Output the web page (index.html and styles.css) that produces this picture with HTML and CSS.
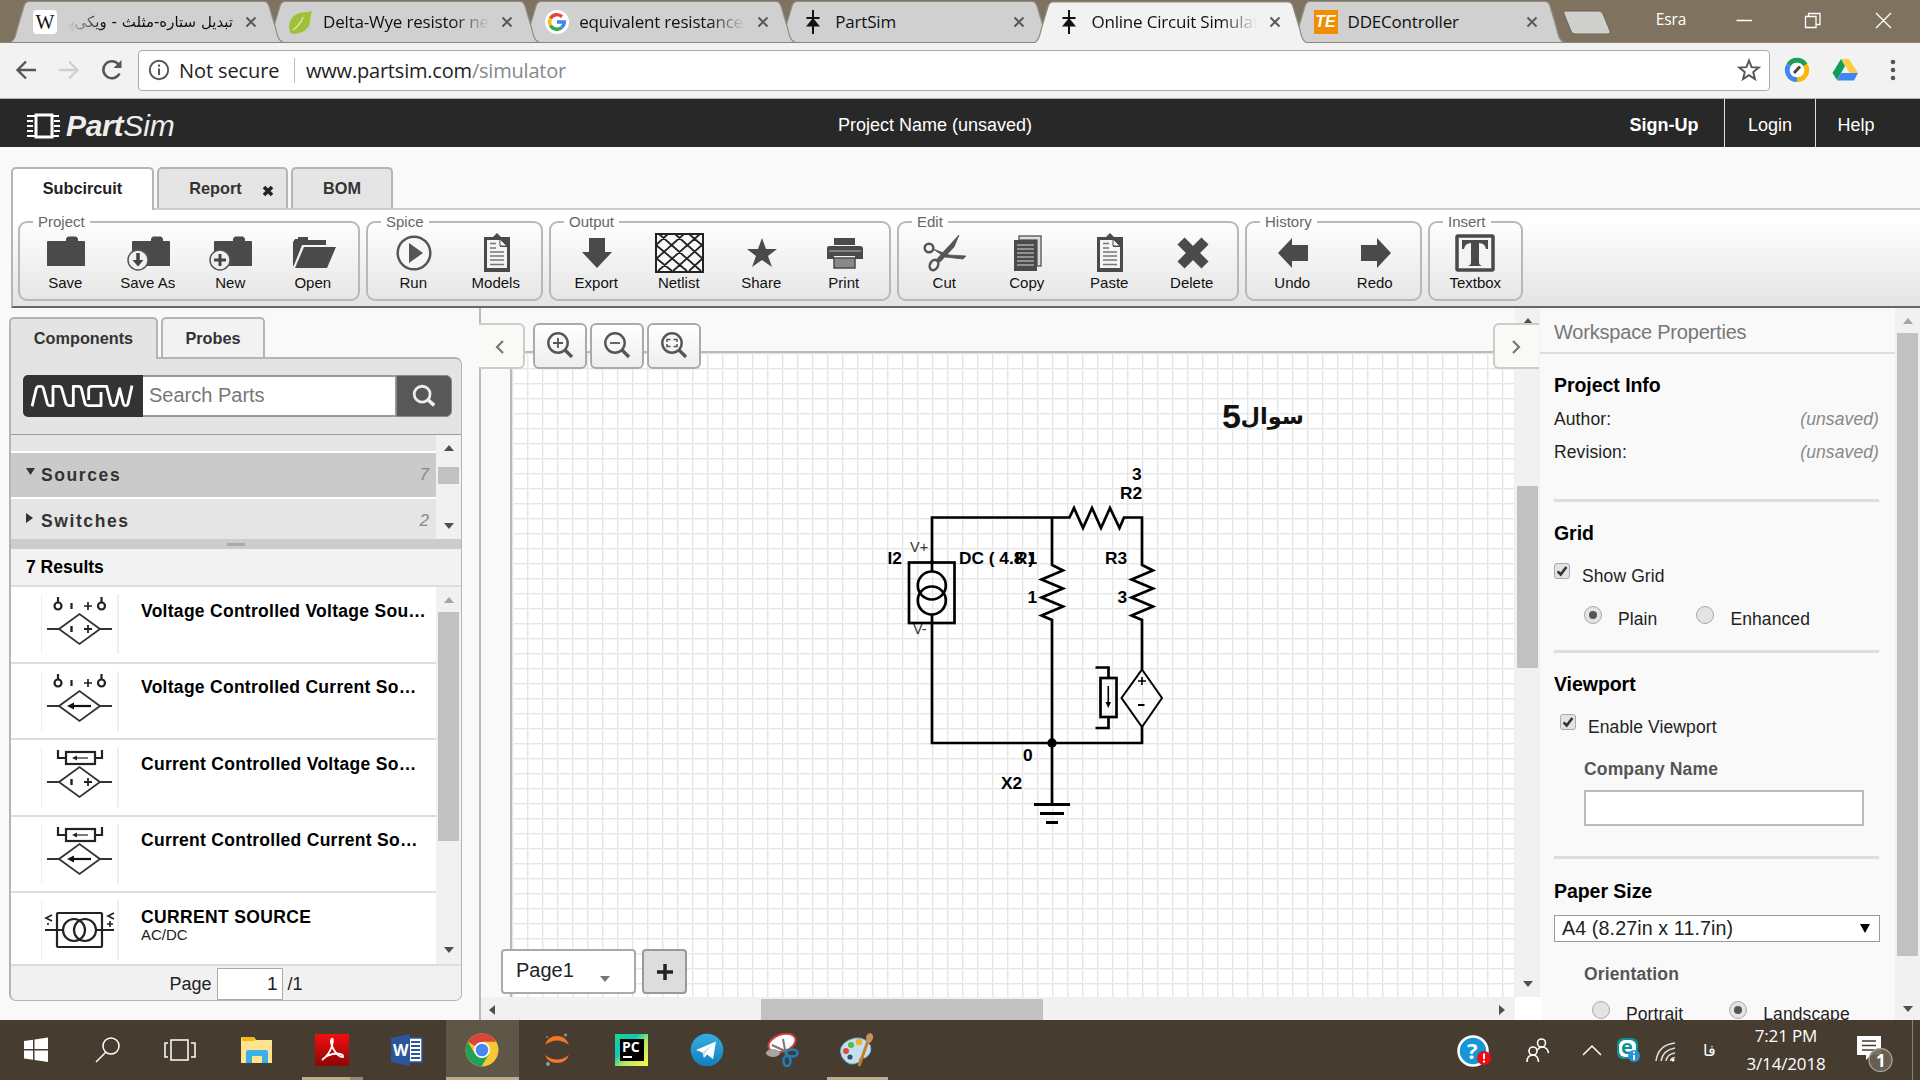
FILE: index.html
```html
<!DOCTYPE html>
<html lang="en">
<head>
<meta charset="utf-8">
<title>Online Circuit Simulator</title>
<link rel="stylesheet" href="styles.css">
</head>
<body>
<svg class="defs" width="0" height="0">
  <defs>
    <linearGradient id="adobe" x1="0" y1="0" x2="0" y2="1"><stop offset="0" stop-color="#f40f0f"/><stop offset="1" stop-color="#8c0505"/></linearGradient>
    <linearGradient id="pych" x1="0" y1="0" x2="1" y2="1"><stop offset="0" stop-color="#21d789"/><stop offset=".35" stop-color="#10c6b8"/><stop offset=".6" stop-color="#b8e85a"/><stop offset="1" stop-color="#fcf84a"/></linearGradient>
    <linearGradient id="tele" x1="0" y1="0" x2="0" y2="1"><stop offset="0" stop-color="#37aee2"/><stop offset="1" stop-color="#0f80bf"/></linearGradient>
    <symbol id="tab" viewBox="0 0 275 42"><path d="M0.5 42.5C6 41 7 34 9 26L15 6Q16.500 1.500 20 1.500H255Q258.500 1.500 260 6L266 26C268 34 269 41 274.500 42.500"/></symbol>
    <symbol id="close" viewBox="0 0 12 12"><path d="M1.500 1.500L10.500 10.500M10.500 1.500L1.500 10.500" stroke="#5a5a5a" stroke-width="2"/></symbol>
    <symbol id="diode" viewBox="0 0 24 24"><path d="M12 0V24M5.500 8H18.500" stroke="#111" stroke-width="2"/><path d="M12 8L19 16.500H5Z" fill="#111"/></symbol>
    <symbol id="folder" viewBox="0 0 38 36"><path d="M0 7Q0 6 1 6H19V3.500L21 1.500H29L31 3.500V6H37Q38 6 38 7V31H0Z" fill="#4a4a4a"/></symbol>
    <symbol id="sheet" viewBox="0 0 26 40"><path d="M0 4H9L13 0L17 4H26V39H0Z" fill="#4a4a4a"/><path d="M3 7H16V14H23V35H3Z" fill="#f4f4f4"/><path d="M16 6L23 13H16Z" fill="#f4f4f4" stroke="#4a4a4a"/><path d="M6 10.500H12M6 15H12M6 19H20M6 23H20M6 27H20M6 31.500H20" stroke="#777" stroke-width="1.500"/></symbol>
    <symbol id="diamond" viewBox="1 0 75 60"><path d="M6 35H18L38.500 20L59 35H71M18 35L38.500 50L59 35" fill="none" stroke="#333" stroke-width="1.800"/></symbol>
    <symbol id="probe" viewBox="1 0 75 60"><g fill="none" stroke="#222" stroke-width="2.200"><circle cx="17" cy="12" r="3.500"/><circle cx="60.500" cy="12" r="3.500"/><path d="M17 8V3M60.500 8V3M30.500 9V15" /><path d="M43 12H51M47 8V16" stroke-width="1.700"/></g></symbol>
    <symbol id="sensor" viewBox="1 0 75 60"><g fill="none" stroke="#222" stroke-width="2.200"><path d="M17 3V11H24M61 3V11H54"/><rect x="25" y="5" width="29" height="12"/><path d="M34 11H47" stroke-width="1.200"/></g><path d="M31 11L36 8.500V13.500Z" fill="#222"/></symbol>
    <symbol id="plusminus" viewBox="1 0 75 60"><path d="M30.500 32V38" stroke="#222" stroke-width="2.400"/><path d="M43 35H51M47 31V39" stroke="#222" stroke-width="1.800"/></symbol>
    <symbol id="flow" viewBox="1 0 75 60"><path d="M31 35H50" stroke="#111" stroke-width="2.200"/><path d="M26 35L33 31.500V38.500Z" fill="#111"/></symbol>
    <symbol id="glass" viewBox="0 0 28 28"><circle cx="12" cy="12" r="9.700" fill="none" stroke="#555" stroke-width="2.400"/><path d="M19 19L26 26" stroke="#555" stroke-width="3.200"/></symbol>
  </defs>
</svg>

<div class="tabstrip">
  <div class="btab"><svg class="shape"><use href="#tab"/></svg>
    <span class="fav wiki">W</span><span class="btitle rtl" dir="rtl">تبدیل ستاره-مثلث - ویکی‌پدیا</span><svg class="x"><use href="#close"/></svg></div>
  <div class="btab"><svg class="shape"><use href="#tab"/></svg>
    <svg class="fav" viewBox="0 0 24 24"><path d="M24 0C22 3 15 1 8 4C1 7-1 15 1 22L3 24C12 24 20 20 21 12C22 7 21 4 24 0Z" fill="#a2c037"/><path d="M4 20Q12 14 14 7" fill="none" stroke="#d8e6a0" stroke-width="1.500"/></svg><span class="btitle fade">Delta-Wye resistor network</span><svg class="x"><use href="#close"/></svg></div>
  <div class="btab"><svg class="shape"><use href="#tab"/></svg>
    <svg class="fav" viewBox="0 0 24 24"><circle cx="12" cy="12" r="12" fill="#fff"/><g fill="none" stroke-width="3.400"><path d="M5.500 8.500A7.300 7.300 0 0 1 17 6.700" stroke="#ea4335"/><path d="M5.500 15.500A7.300 7.300 0 0 1 5.500 8.500" stroke="#fbbc05"/><path d="M5.500 15.500A7.300 7.300 0 0 0 16.500 17.600" stroke="#34a853"/><path d="M12 12H19.300A7.300 7.300 0 0 1 16.500 17.600" stroke="#4285f4"/></g></svg><span class="btitle fade">equivalent resistance calculator</span><svg class="x"><use href="#close"/></svg></div>
  <div class="btab"><svg class="shape"><use href="#tab"/></svg>
    <svg class="fav"><use href="#diode"/></svg><span class="btitle">PartSim</span><svg class="x"><use href="#close"/></svg></div>
  <div class="btab active"><svg class="shape"><use href="#tab"/></svg>
    <svg class="fav"><use href="#diode"/></svg><span class="btitle fade">Online Circuit Simulator</span><svg class="x"><use href="#close"/></svg></div>
  <div class="btab"><svg class="shape"><use href="#tab"/></svg>
    <span class="fav te">TE</span><span class="btitle">DDEController</span><svg class="x"><use href="#close"/></svg></div>
  <svg class="newtab" width="52" height="26" viewBox="0 0 52 26"><path d="M4 1H38Q41 1 42 4L49 21Q50 24 47 24H14Q11 24 10 21L3 4Q2 1 4 1Z" fill="#cfcfcb" stroke="#6b6355"/></svg>
  <span class="user">Esra</span>
  <svg class="winbtns" width="170" height="30" viewBox="0 0 170 30" fill="none" stroke="#fff" stroke-width="1.300"><path d="M10.500 15.500H26M79.500 11.500H90V22.500H79.500ZM82.500 11V8.500H94V19.500H90.500M150 8L165 23M165 8L150 23"/></svg>
</div>

<div class="addressbar">
  <svg width="110" height="36" viewBox="0 0 110 36" fill="none" stroke-width="2.400"><path d="M36 18H18M26 9.500L17.500 18L26 26.500" stroke="#555"/><path d="M59 18H77M69 9.500L77.500 18L69 26.500" stroke="#d0d0d0"/></svg>
  <svg class="reload" width="24" height="24" viewBox="0 0 24 24"><path d="M19.500 15.500A8.500 8.500 0 1 1 18.500 6.500" fill="none" stroke="#555" stroke-width="2.500"/><path d="M21.500 2V10H13.500Z" fill="#555"/></svg>
  <div class="omnibox">
    <svg width="22" height="22" viewBox="0 0 22 22"><circle cx="11" cy="11" r="9.200" fill="none" stroke="#555" stroke-width="1.900"/><path d="M11 9.500V16M11 5.500V7.700" stroke="#555" stroke-width="2"/></svg>
    <span class="secure">Not secure</span><span class="url">www.partsim.com<i>/simulator</i></span>
    <svg class="star" width="24" height="24" viewBox="0 0 24 24"><path d="M12 2.500L14.600 9.200L21.700 9.600L16.200 14.100L18 21L12 17.100L6 21L7.800 14.100L2.300 9.600L9.400 9.200Z" fill="none" stroke="#555" stroke-width="1.900"/></svg>
  </div>
  <svg class="ext" width="26" height="26" viewBox="0 0 26 26"><g fill="none" stroke-width="5"><path d="M4.800 8A9.500 9.500 0 0 1 21.200 8" stroke="#1b9e57"/><path d="M21.200 8A9.500 9.500 0 0 1 13 22.500" stroke="#fbb905"/><path d="M13 22.500A9.500 9.500 0 0 1 4.800 8" stroke="#4285f4"/></g><circle cx="13" cy="13" r="7.300" fill="#fff"/><path d="M10 16L16 9.500" stroke="#444" stroke-width="3"/></svg>
  <svg class="drive" width="26" height="24" viewBox="0 0 26 24"><path d="M9 1H17L26 15H17.500Z" fill="#fc4"/><path d="M9 1L13 8L5 22L0.500 15Z" fill="#0f9d58"/><path d="M9 15H26L22 22.500H5Z" fill="#4285f4"/></svg>
  <svg class="dots" width="6" height="22" viewBox="0 0 6 22" fill="#555"><circle cx="3" cy="3" r="2.300"/><circle cx="3" cy="11" r="2.300"/><circle cx="3" cy="19" r="2.300"/></svg>
</div>

<header class="apphead">
  <div class="logo"><svg width="34" height="26" viewBox="0 0 34 26" fill="none" stroke="#fff"><rect x="9" y="2" width="16" height="22" stroke-width="3"/><path d="M0 3H8M0 8H6M0 13H6M0 18H6M0 23H8M26 3H32M27 8H33M27 13H33M27 18H33M26 23H32" stroke-width="2"/></svg><b>Part</b><span>Sim</span></div>
  <div class="project">Project Name (unsaved)</div>
  <nav><a class="signup">Sign-Up</a><a>Login</a><a>Help</a></nav>
</header>

<div class="maintabs">
  <div class="mtab on">Subcircuit</div>
  <div class="mtab rep">Report<svg width="12" height="12" viewBox="0 0 12 12"><path d="M2 2L10 10M10 2L2 10" stroke="#222" stroke-width="3.600"/></svg></div>
  <div class="mtab">BOM</div>
</div>

<div class="ribbon">
  <fieldset><legend>Project</legend>
    <div class="tool"><svg width="38" height="36"><use href="#folder"/></svg>Save</div>
    <div class="tool"><svg width="44" height="40" viewBox="0 0 44 40"><svg x="5" y="2" width="38" height="36"><use href="#folder"/></svg><circle cx="11" cy="27" r="10" fill="#f0f0f0" stroke="#555" stroke-width="1.500"/><path d="M11 20V29" stroke="#444" stroke-width="3.500"/><path d="M5.500 27H16.500L11 33.500Z" fill="#444"/></svg>Save As</div>
    <div class="tool"><svg width="44" height="40" viewBox="0 0 44 40"><svg x="5" y="2" width="38" height="36"><use href="#folder"/></svg><circle cx="11" cy="27" r="10" fill="#f0f0f0" stroke="#555" stroke-width="1.500"/><path d="M11 21V33M5 27H17" stroke="#444" stroke-width="3"/></svg>New</div>
    <div class="tool"><svg width="44" height="34" viewBox="0 0 44 34"><path d="M1 6L3 3H6V1H16V4H34V9H10L2 30H1Z" fill="#4a4a4a"/><path d="M12 11H44L35 32H3Z" fill="#4a4a4a"/><path d="M11 10L2 31" stroke="#eee" stroke-width="1.500"/></svg>Open</div>
  </fieldset>
  <fieldset><legend>Spice</legend>
    <div class="tool"><svg width="36" height="38" viewBox="0 0 36 38"><circle cx="18" cy="19" r="16.300" fill="#f6f6f6" stroke="#555" stroke-width="2.500"/><path d="M13 9L27 19L13 29Z" fill="#555"/></svg>Run</div>
    <div class="tool"><svg width="26" height="40"><use href="#sheet"/></svg>Models</div>
  </fieldset>
  <fieldset><legend>Output</legend>
    <div class="tool"><svg width="32" height="30" viewBox="0 0 32 30"><path d="M8 0H24V14H31L16 30L1 14H8Z" fill="#4a4a4a"/></svg>Export</div>
    <div class="tool"><svg width="50" height="40" viewBox="0 0 50 40"><path d="M1 1H48V39H1Z" fill="#f8f8f8" stroke="#222" stroke-width="2"/><path d="M1 12L13 1M1 26L29 1M3 38L45 1M18 38L48 11M34 38L48 25M1 25L17 38M1 12L32 38M4 1L46 38M20 1L48 26M34 1L48 13" fill="none" stroke="#222" stroke-width="1.800"/></svg>Netlist</div>
    <div class="tool"><svg width="32" height="32" viewBox="0 0 32 32"><path d="M16 1L20 12L31 12L22 19L26 30L16 23L6 30L10 19L1 12H12Z" fill="#4a4a4a"/></svg>Share</div>
    <div class="tool"><svg width="38" height="34" viewBox="0 0 38 34"><path d="M8 2H29V9H8ZM3 10H34Q37 10 37 13V23H29V20H8V23H1V13Q1 10 3 10Z" fill="#4a4a4a"/><path d="M3 15H35" stroke="#bbb"/><path d="M8 22H29V32H8Z" fill="#888" stroke="#4a4a4a" stroke-width="1.500"/></svg>Print</div>
  </fieldset>
  <fieldset><legend>Edit</legend>
    <div class="tool"><svg width="44" height="38" viewBox="0 0 44 38" fill="none" stroke="#555"><circle cx="6" cy="14" r="4.300" stroke-width="2.500"/><ellipse cx="11" cy="31" rx="4" ry="5.500" transform="rotate(25 11 31)" stroke-width="2.500"/><path d="M10 15L26 21L43 22L40 25L22 23ZM13 26L36 1L31 13L17 28Z" fill="#555" stroke-width=".8"/></svg>Cut</div>
    <div class="tool"><svg width="30" height="38" viewBox="0 0 30 38"><path d="M6 2H28V32H24V6H6Z" fill="#ddd" stroke="#666" stroke-width="1.500"/><path d="M1 6H24V37H1Z" fill="#4a4a4a"/><path d="M4 11H21M4 15H21M4 19H21M4 23H21M4 27H21M4 31H21" stroke="#aaa" stroke-width="1.500"/></svg>Copy</div>
    <div class="tool"><svg width="26" height="40"><use href="#sheet"/></svg>Paste</div>
    <div class="tool"><svg width="32" height="32" viewBox="0 0 32 32"><path d="M4 4L28 28M28 4L4 28" stroke="#4a4a4a" stroke-width="10"/></svg>Delete</div>
  </fieldset>
  <fieldset><legend>History</legend>
    <div class="tool"><svg width="32" height="32" viewBox="0 0 32 32"><path d="M1 16L15 1V8H31V24H15V31Z" fill="#4a4a4a"/></svg>Undo</div>
    <div class="tool"><svg width="32" height="32" viewBox="0 0 32 32"><path d="M31 16L17 1V8H1V24H17V31Z" fill="#4a4a4a"/></svg>Redo</div>
  </fieldset>
  <fieldset class="ins"><legend>Insert</legend>
    <div class="tool"><svg width="40" height="38" viewBox="0 0 40 38"><rect x="2" y="2" width="36" height="34" rx="1" fill="#f4f4f4" stroke="#4a4a4a" stroke-width="3.500"/><path d="M7 6H33V15H31Q30 9 24 9V29Q24 31 27 32H13Q16 31 16 29V9Q10 9 9 15H7Z" fill="#4a4a4a"/></svg>Textbox</div>
  </fieldset>
</div>

<main class="work">
  <aside class="left">
    <div class="ltabs"><div class="ltab on">Components</div><div class="ltab">Probes</div></div>
    <div class="lpanel">
      <div class="search">
        <div class="arrow"><svg width="104" height="24" viewBox="97 224 312 72" fill="none" stroke="#fff" stroke-width="8.500" stroke-linejoin="round"><path d="M100 291L113 237Q115 231 121 231H127Q132 231 134 237L146 283Q148 289 154 289H163V231H181Q187 231 189 237L202 283Q205 289 211 289H224V231H240Q246 231 248 237L259 283Q262 289 268 289H307V248M270 272V240Q270 231 279 231H324L337 283Q339 289 345 289Q350 289 352 283L363 238L374 283Q376 289 381 289Q386 289 388 283L400 229"/></svg></div>
        <div class="field">Search Parts</div>
        <div class="go"><svg width="26" height="26" viewBox="0 0 28 28"><circle cx="12" cy="12" r="8.500" fill="none" stroke="#eee" stroke-width="3"/><path d="M18 18L25 24" stroke="#eee" stroke-width="4"/></svg></div>
      </div>
      <div class="cats">
        <div class="catlist"><div class="cat stub"></div>
          <div class="cat sel"><svg width="10" height="8" viewBox="0 0 10 8"><path d="M0 0H9L4.500 7Z" fill="#333"/></svg><b>Sources</b><i>7</i></div>
          <div class="cat"><svg width="10" height="10" viewBox="0 0 10 10"><path d="M0 0L7 5L0 10Z" fill="#333"/></svg><b>Switches</b><i>2</i></div></div>
        <div class="vbar"><span class="up"></span><span class="thumb t1"></span><span class="down"></span></div>
      </div>
      <div class="splitter"><span></span></div>
      <div class="results">7 Results</div>
      <div class="parts">
        <div class="partlist">
          <div class="part"><svg class="pic"><use href="#probe"/><use href="#diamond"/><use href="#plusminus"/></svg><div><b>Voltage Controlled Voltage Source</b></div></div>
          <div class="part"><svg class="pic"><use href="#probe"/><use href="#diamond"/><use href="#flow"/></svg><div><b>Voltage Controlled Current Source</b></div></div>
          <div class="part"><svg class="pic"><use href="#sensor"/><use href="#diamond"/><use href="#plusminus"/></svg><div><b>Current Controlled Voltage Source</b></div></div>
          <div class="part"><svg class="pic"><use href="#sensor"/><use href="#diamond"/><use href="#flow"/></svg><div><b>Current Controlled Current Source</b></div></div>
          <div class="part"><svg class="pic" viewBox="1 0 75 60" fill="none" stroke="#222" stroke-width="2.200"><rect x="16" y="13" width="45" height="34" rx="1"/><circle cx="33" cy="30" r="11"/><circle cx="44" cy="30" r="11"/><path d="M4 30H22M55 30H73"/><path d="M11 15L5 18L11 21M73 13L67 16L73 19M66 24H72M69 21V27M7 23V25" stroke-width="1.700"/></svg><div><b>CURRENT SOURCE</b><small>AC/DC</small></div></div>
        </div>
        <div class="vbar light"><span class="up"></span><span class="thumb t2"></span><span class="down dk"></span></div>
      </div>
      <div class="pager">Page<span class="pg">1</span>/1</div>
    </div>
  </aside>

  <section class="center">
    <div class="viewrow">
      <div class="paper">
        <div class="sheetarea">
          <svg class="circuit" viewBox="512 353 1003 644" fill="none" stroke="#000" stroke-width="2.700">
            <path d="M932 562V517.500H1069.500L1074 508L1083 528L1092 508L1101 528L1110 508L1119.500 528L1124 517.500H1142V565L1153 570.500L1131.500 579.500L1153 588.500L1131.500 597.500L1153 606.500L1131.500 615.500L1142 620V669.500"/>
            <path d="M1052 517.500V565L1063 570.500L1041.500 579.500L1063 588.500L1041.500 597.500L1063 606.500L1041.500 615.500L1052 620V804M932 614V743H1142V727M932 560V571"/>
            <rect x="909" y="562.500" width="45.500" height="60.500"/>
            <circle cx="931.800" cy="585.500" r="14"/><circle cx="931.800" cy="600.500" r="14"/>
            <path d="M1142 669.500L1162 698L1142 727L1121.500 698Z" stroke-width="2"/>
            <path d="M1138 681H1146M1142 677V685" stroke-width="1.600"/><path d="M1138 705H1144.500" stroke-width="2"/>
            <rect x="1100.500" y="678" width="16" height="39"/><path d="M1095.500 667.500H1108.500V678M1095.500 728H1108.500V717"/>
            <path d="M1108.300 686V704" stroke-width="1.600"/><path d="M1105.500 702H1111L1108.300 708Z" fill="#000" stroke="none"/>
            <circle cx="1052" cy="743" r="4.700" fill="#000" stroke="none"/>
            <path d="M1034 804.500H1070M1040 813.500H1064M1046 822.500H1058" stroke-width="3"/>
            <g class="lbl"><text x="1132" y="480">3</text><text x="1120" y="498.500">R2</text><text x="887.500" y="563.500">I2</text><text x="959" y="563.500">DC ( 4.8 )</text><text x="1015" y="563.500">R1</text><text x="1105" y="563.500">R3</text><text x="1027.500" y="602.500">1</text><text x="1117.500" y="602.500">3</text><text x="1023" y="760.500">0</text><text x="1001" y="789">X2</text></g>
            <g class="pin"><text x="910" y="552">V+</text><text x="913" y="633.500">V-</text></g>
            <text class="heading five" x="1222" y="428">5</text><text class="heading" x="1304" y="424" direction="rtl">سوال</text>
          </svg>
        </div>
      </div>
      <div class="vbar"><span class="up"></span><span class="thumb t3"></span><span class="down"></span></div>
    </div>
    <div class="hbar"><span class="lf"></span><span class="hthumb"></span><span class="rt"></span></div>
    <div class="collapse cl"><svg width="10" height="16" viewBox="0 0 10 16"><path d="M8 2L2 8L8 14" fill="none" stroke="#777" stroke-width="2.200"/></svg></div>
    <div class="collapse cr"><svg width="10" height="16" viewBox="0 0 10 16"><path d="M2 2L8 8L2 14" fill="none" stroke="#777" stroke-width="2.200"/></svg></div>
    <div class="zooms">
      <div class="zb"><svg width="28" height="28" viewBox="0 0 28 28"><use href="#glass"/><path d="M7 12H17M12 7V17" stroke="#555" stroke-width="1.800"/></svg></div>
      <div class="zb"><svg width="28" height="28" viewBox="0 0 28 28"><use href="#glass"/><path d="M7 12H17" stroke="#555" stroke-width="1.800"/></svg></div>
      <div class="zb"><svg width="28" height="28" viewBox="0 0 28 28"><use href="#glass"/><path d="M7 11V8.500H10.500M13.500 8.500H17V11M17 13V15.500H13.500M10.500 15.500H7V13" fill="none" stroke="#555" stroke-width="1.500"/></svg></div>
    </div>
    <div class="pages"><div class="pagetab">Page1<span class="caret"></span></div><div class="addpage"><svg width="18" height="18" viewBox="0 0 18 18"><path d="M9 1V17M1 9H17" stroke="#222" stroke-width="3.500"/></svg></div></div>
  </section>

  <aside class="right">
    <div class="props">
      <h2>Workspace Properties</h2>
      <div class="sec s1"><h3>Project Info</h3><p><span>Author:</span><em>(unsaved)</em></p><p><span>Revision:</span><em>(unsaved)</em></p></div>
      <div class="sec s2"><h3>Grid</h3>
        <div class="opt"><span class="check"><svg viewBox="0 0 16 16"><path d="M3 8.500L6.500 12L13 3.500" fill="none" stroke="#333" stroke-width="3"/></svg></span><span>Show Grid</span></div>
        <div class="opt radios"><span class="radio sel"></span><span class="r1">Plain</span><span class="radio"></span><span>Enhanced</span></div></div>
      <div class="sec s3"><h3>Viewport</h3>
        <div class="opt vp"><span class="check"><svg viewBox="0 0 16 16"><path d="M3 8.500L6.500 12L13 3.500" fill="none" stroke="#333" stroke-width="3"/></svg></span><span>Enable Viewport</span></div>
        <h4>Company Name</h4><div class="textfield"></div></div>
      <div class="sec s4"><h3>Paper Size</h3>
        <div class="select">A4 (8.27in x 11.7in)<span></span></div>
        <h4>Orientation</h4>
        <div class="opt orient"><span class="radio"></span><span class="r2">Portrait</span><span class="radio sel"></span><span>Landscape</span></div></div>
    </div>
    <div class="vbar light"><span class="up"></span><span class="thumb t4"></span><span class="down"></span></div>
  </aside>
</main>

<footer class="taskbar">
  <div class="tb"><svg width="24" height="26" viewBox="0 0 24 26" fill="#fff"><path d="M0 4L9 2.700V12H0ZM10.500 2.500L24 .5V12H10.500ZM0 13.500H9V22.800L0 21.500ZM10.500 13.500H24V25L10.500 23Z"/></svg></div>
  <div class="tb"><svg width="26" height="28" viewBox="0 0 26 28" fill="none" stroke="#fff" stroke-width="1.500"><circle cx="16" cy="10" r="8"/><path d="M11 16L1 26"/></svg></div>
  <div class="tb"><svg width="32" height="24" viewBox="0 0 32 24" fill="none" stroke="#fff" stroke-width="1.500"><path d="M7 2H24V22H7ZM4 5H1V19H4M27 5H31V19H27"/></svg></div>
  <div class="tb w"><svg width="32" height="28" viewBox="0 0 32 28"><path d="M0 2Q0 1 1 1H13L15 4H31V27H0Z" fill="#ffe38e"/><path d="M1 1H13L14 5H1Z" fill="#f2b91d"/><path d="M5 27V16Q5 14 7 14H25Q27 14 27 16V27H21V20H11V27Z" fill="#3bb0e6"/></svg></div>
  <div class="tb w"><svg width="34" height="34" viewBox="0 0 34 34"><path d="M0 1H34V33H0Z" fill="url(#adobe)"/><path d="M7 27Q14 22 17 13Q19 4 16.500 6Q14.500 9 19 17Q23 24 28 24Q29 21 22 20.500Q13 21 8 26" fill="none" stroke="#fff" stroke-width="1.800"/></svg><i class="u u2"></i></div>
  <div class="tb w"><svg width="32" height="32" viewBox="0 0 32 32"><path d="M17 4H31V28H17Z" fill="#fff" stroke="#2b579a" stroke-width="1.500"/><path d="M20 8H29M20 12H29M20 16H29M20 20H29M20 24H29" stroke="#2b579a" stroke-width="1.800"/><path d="M0 4L19 0V32L0 28Z" fill="#2b579a"/><text x="2" y="22" fill="#fff" class="wd">W</text></svg></div>
  <div class="tb w cur"><svg width="34" height="34" viewBox="0 0 34 34"><circle cx="17" cy="17" r="16.500" fill="#f9c82f"/><path d="M17 17L2.700 8.800A16.500 16.500 0 0 1 31.300 8.800H17Z" fill="#d9453a"/><path d="M2.700 8.800A16.500 16.500 0 0 0 16.500 33.500L24 21H10Z" fill="#1fa05b"/><circle cx="17" cy="17" r="8" fill="#fff"/><circle cx="17" cy="17" r="6.300" fill="#4a88f0"/></svg><i class="u u3"></i></div>
  <div class="tb w"><svg width="28" height="34" viewBox="0 0 28 34"><path d="M2 12Q5 3 14 3Q23 3 26 12Q20 7.500 14 7.500Q8 7.500 2 12ZM2 22Q8 26.500 14 26.500Q20 26.500 26 22Q23 30 14 30Q5 30 2 22Z" fill="#f37726"/><circle cx="22.500" cy="2" r="1.700" fill="#888"/><circle cx="4" cy="4" r="1.200" fill="#777"/><circle cx="5" cy="31" r="2" fill="#999"/></svg></div>
  <div class="tb w"><svg width="34" height="34" viewBox="0 0 34 34"><path d="M0 1H33V33H0Z" fill="url(#pych)"/><path d="M5 6H29V28H5Z" fill="#000"/><text x="7" y="19" fill="#fff" class="pc">PC</text><path d="M8 24H17" stroke="#fff" stroke-width="2"/></svg></div>
  <div class="tb w"><svg width="34" height="34" viewBox="0 0 34 34"><circle cx="17" cy="17" r="16.300" fill="url(#tele)"/><path d="M6 17L26 8.500L23 26L17 21.500L14 25L12.500 19.500Z" fill="#fff"/><path d="M12.500 19.500L22 12L15 20.500L14 25Z" fill="#c4dcea"/></svg></div>
  <div class="tb w"><svg width="34" height="34" viewBox="0 0 34 34"><ellipse cx="17" cy="10" rx="14" ry="8.500" transform="rotate(-20 17 10)" fill="#fff" stroke="#d63a3f" stroke-width="2"/><ellipse cx="8" cy="20" rx="7" ry="4" fill="#a8a4a0"/><path d="M18 6L21 22M7 12L22 19" stroke="#777" stroke-width="2"/><g fill="none" stroke="#1d7fc0" stroke-width="2.600"><ellipse cx="27" cy="20" rx="5.500" ry="3.500"/><ellipse cx="22" cy="28" rx="3.500" ry="5"/></g></svg></div>
  <div class="tb w"><svg width="36" height="34" viewBox="0 0 36 34"><path d="M3 24Q-2 13 10 7Q24 1 31 12Q34 20 26 25Q20 23 20 29Q10 35 3 24Z" fill="#c4e0f0" stroke="#7db0d0"/><circle cx="7" cy="18" r="3" fill="#e0483e"/><circle cx="12" cy="12" r="3" fill="#58b848"/><circle cx="20" cy="9" r="3.200" fill="#f0b22a"/><circle cx="11" cy="24" r="2.600" fill="#34506a"/><path d="M29 8L20 33" stroke="#c97a2c" stroke-width="3"/><path d="M28 9Q25 1 32 0Q37 4 31 10Z" fill="#c8935a"/></svg><i class="u u3 u4"></i></div>
  <div class="tray">
    <svg class="help" width="36" height="34" viewBox="0 0 36 34"><circle cx="16" cy="16" r="14.500" fill="#1697d5" stroke="#fff" stroke-width="2.500"/><text x="10" y="24" class="q" fill="#fff">?</text><circle cx="27" cy="23" r="7" fill="#f00a12"/><path d="M27 18.500V24M27 25.500V27.500" stroke="#fff" stroke-width="2"/></svg>
    <svg class="ppl" width="24" height="26" viewBox="0 0 24 26" fill="none" stroke="#fff" stroke-width="1.600"><circle cx="15.500" cy="6" r="4"/><circle cx="7" cy="14" r="4"/><path d="M1 25Q1 18 7 18Q12 18 12.500 25M11.500 13Q13 10 16 10Q21.500 10 22.500 16"/></svg>
    <svg class="chev" width="20" height="12" viewBox="0 0 20 12"><path d="M1 11L10 2L19 11" fill="none" stroke="#fff" stroke-width="1.500"/></svg>
    <svg class="eset" width="26" height="26" viewBox="0 0 26 26"><rect x="1" y="1" width="21" height="21" rx="6" fill="#0f9093"/><rect x="3" y="3" width="17" height="17" rx="6" fill="#fff"/><text x="5" y="17" class="e" fill="#0f9093">e</text><circle cx="18" cy="19" r="6" fill="#2a8fd8"/><path d="M18 18V23M18 14.500V16.500" stroke="#fff" stroke-width="1.800"/></svg>
    <svg class="wifi" width="22" height="22" viewBox="0 0 22 22" fill="none" stroke="#ddd" stroke-width="1.500"><path d="M1 20Q3 4 20 2M6 20Q8 9 20 7M11 20Q12 13 20 12M15.500 20Q16 17 20 16.500"/><circle cx="18" cy="19" r="1.500" fill="#fff" stroke="none"/></svg>
    <span class="lang">فا</span>
    <span class="clock">7:21 PM<br>3/14/2018</span>
    <svg class="note" width="38" height="38" viewBox="0 0 38 38"><path d="M1 1H25V20H15L10 25V20H1Z" fill="#fff"/><path d="M6 6H20M6 10.500H20M6 15H20" stroke="#463d30" stroke-width="1.300"/><circle cx="24.500" cy="25" r="11.500" fill="#6b6357" fill-opacity=".9" stroke="#aaa398" stroke-width="1.300"/><text x="20" y="31.500" class="n" fill="#fff">1</text></svg>
  </div>
</footer>
</body>
</html>
```
FILE: styles.css
```css
*{box-sizing:border-box}
body{margin:0;width:1920px;height:1080px;overflow:hidden;display:flex;flex-direction:column;background:#f9f9f9;font-family:"Liberation Sans",Arial,sans-serif;color:#222}
svg{display:block;flex:none}
.defs{position:absolute}
/* browser window */
.tabstrip{height:43px;flex:none;background:#7f725f;display:flex;padding-left:9px;border-bottom:1px solid #8d8778;font-family:"Open Sans",sans-serif;isolation:isolate}
.btab{position:relative;width:275px;height:43px;flex:none;margin-right:-18.900px;display:flex;align-items:center;padding:0 0 0 24px}
.btab:nth-child(1){z-index:6}.btab:nth-child(2){z-index:5}.btab:nth-child(3){z-index:4}.btab:nth-child(4){z-index:3}.btab:nth-child(5){z-index:8}
.shape{position:absolute;left:0;top:0;width:275px;height:42px;fill:#d0d0d0;stroke:#8f8c86;stroke-width:1.200}
.btab.active .shape{fill:#f2f2f2;height:43px}
.fav{position:relative;width:24px;height:24px;flex:none}
.wiki{background:#fff;border-radius:4px;font:20px/24px "Liberation Serif",serif;text-align:center;color:#111}
.te{background:#f28d00;color:#fff;font:italic bold 16px/24px "Liberation Sans",sans-serif;text-align:center}
.btitle{position:relative;width:166px;margin-left:10px;font-size:17px;letter-spacing:-.2px;line-height:26px;white-space:nowrap;overflow:hidden;color:#111}
.btitle.rtl{letter-spacing:0;font-family:"DejaVu Sans",sans-serif;font-size:15px;mask-image:linear-gradient(to left,#000 78%,transparent)}
.fade{mask-image:linear-gradient(to right,#000 78%,transparent)}
.x{position:relative;width:12px;height:12px;margin-left:12px}
.newtab{margin:10px 0 0 15px}
.user{margin:8px 0 0 43px;color:#fff;font-size:15.500px;letter-spacing:-.1px;line-height:22px;width:70px}
.winbtns{margin-top:5px}
.addressbar{height:56px;flex:none;background:#f2f2f2;border-bottom:1px solid #b5b5b3;display:flex;align-items:center;padding-bottom:1px;font-family:"Open Sans",sans-serif}
.reload{margin-left:-10px}
.omnibox{margin-left:14px;width:1632px;height:41px;background:#fff;border:1px solid #aaa;border-radius:4px;display:flex;align-items:center;padding-left:9px;font-size:20px;color:#222}
.secure{margin-left:9px;width:116px;border-right:1px solid #bbb;line-height:25px;letter-spacing:-.1px;white-space:nowrap}
.url{margin-left:11px;letter-spacing:-.2px}
.url i{font-style:normal;color:#888}
.star{margin-left:auto;margin-right:8px}
.ext{margin-left:14px}.drive{margin-left:22px}.dots{margin-left:32px}
/* application header */
.apphead{height:48px;flex:none;background:#282828;color:#fff;display:flex;align-items:center;justify-content:space-between;font-size:17.500px}
.logo{display:flex;align-items:center;width:500px;height:48px;padding:5px 0 0 27px;font-size:30px;font-style:italic;color:#eee}
.logo svg{margin-right:5px}
.logo b{letter-spacing:-.3px}
.project{width:200px;text-align:center;white-space:nowrap;display:flex;justify-content:center;margin-left:60px;padding-top:5px;font-size:18px}
nav{display:flex;width:610px;justify-content:flex-end;font-size:18px}
nav a{width:91px;line-height:48px;height:48px;padding-top:2px;text-align:center;border-left:1.500px solid #ddd}
nav a:last-child{width:105px;padding-right:24px}
nav .signup{width:120px;font-weight:bold;border:0}
/* main tabs */
.maintabs{height:61px;flex:none;display:flex;align-items:flex-end;padding-left:11px;gap:3px;background:#f9f9f9}
.mtab{height:41px;width:102px;border:2px solid #b5b5b5;border-bottom:0;border-radius:5px 5px 0 0;background:#e5e5e5;font-weight:bold;font-size:16.250px;line-height:38px;text-align:center;color:#333}
.mtab.on{width:143px;height:43px;margin-bottom:-2px;background:#fff;color:#222;position:relative}
.mtab.rep{width:131px;display:flex;justify-content:center;gap:20px;padding-left:18px}
.rep svg{margin-top:16px}
/* ribbon */
.ribbon{height:100px;flex:none;margin-left:11px;border-left:2px solid #b5b5b5;border-top:2px solid #ccc;border-bottom:2px solid #666;background:linear-gradient(#fff 10%,#e4e4e4);display:flex;gap:6px;padding:2px 0 6px 5px}
fieldset{margin:0;min-width:0;height:89px;padding:0 4px;border:2px solid #b9b9b9;border-radius:9px;display:flex}
legend{font-size:15px;line-height:19px;color:#666;padding:0 5px;margin-left:9px}
.tool{width:82.500px;display:flex;flex-direction:column;align-items:center;justify-content:flex-end;font-size:15px;line-height:18px;color:#111;height:66px;padding-bottom:5px}
.tool svg{margin:auto -2px auto 0}
.ins .tool svg{margin-right:0}
/* workspace */
.work{flex:1;min-height:0;display:flex}
.left{width:479px;flex:none;padding:9px 17px 0 9px}
.ltabs{display:flex;gap:4px;height:40px}
.ltab{width:104px;height:40px;border:2px solid #b5b5b5;border-bottom:0;border-radius:5px 5px 0 0;background:#f2f2f2;font-weight:bold;font-size:16.250px;line-height:38px;text-align:center;color:#333}
.ltab.on{width:149px;margin-right:-1px;height:42px;background:#e4e4e4;position:relative}
.lpanel{height:644px;width:453px;border:2px solid #b5b5b5;border-bottom-width:1px;border-right-width:1px;border-radius:0 7px 7px 7px;background:#e4e4e4;overflow:hidden;display:flex;flex-direction:column}
.lpanel>*{flex:none}
.search{height:76px;display:flex;padding:16px 0 0 12px;border-bottom:1px solid #999}
.arrow{width:120px;height:42px;background:#333;border-radius:5px 0 0 5px;display:flex;align-items:center;justify-content:center}
.field{width:253px;height:42px;background:#fff;border:2px solid #999;border-width:2px 1px 2px 0;font-size:20px;line-height:36px;padding-left:6px;color:#777}
.go{width:56px;height:42px;background:#585858;border:1px solid #888;border-radius:0 6px 6px 0;display:flex;align-items:center;justify-content:center}
.cats{height:104px;display:flex}
.catlist{width:425px;background:#fff}
.cat{height:44px;background:#e5e5e5;margin-bottom:2px;display:flex;align-items:center;padding:0 7px 0 15px}
.cat.stub{height:16px}
.cat.sel{background:#cacaca}
.cat svg{margin:-6px 5px 0 0}
.cat b{font-size:17.500px;letter-spacing:1.600px;color:#333}
.cat i{margin-left:auto;font-size:17px;color:#888}
.vbar{width:25px;background:#f1f1f1;display:flex;flex-direction:column;align-items:center;flex:none;padding:10px 0}
.up,.down{border:5.500px solid transparent;border-top:0;border-bottom:6px solid #505050;flex:none}
.down{border-top:6px solid #505050;border-bottom:0;margin-top:auto}
.thumb{width:21px;background:#c1c1c1;flex:none}
.t1{height:17px;margin-top:16px}.t2{height:229px;margin-top:9px}.t3{height:182px;margin-top:162px}.t4{height:623px;margin-top:9px}
.light .up{border-bottom-color:#a5a5a5}
.down.dk{margin-bottom:1px}
.right .down{margin-bottom:-2px}
.splitter{height:10px;background:#ccc;display:flex;align-items:center;justify-content:center}
.splitter span{width:18px;height:3px;background:#aaa}
.results{height:38px;background:#f2f2f2;border-bottom:2px solid #ddd;font-weight:bold;font-size:17.500px;line-height:36px;padding-left:15px;color:#000}
.parts{height:377px;display:flex}
.partlist{width:425px;overflow:hidden;background:#fff}
.part{height:76.500px;border-bottom:2px solid #ddd;display:flex;padding:7px 10px 0 30px}
.pic{width:78px;height:60px;border-left:1px solid #eee;border-right:2px solid #eee;overflow:hidden}
.part div{margin:6.600px 0 0 22px;min-width:0;flex:1}
.part b{display:block;font-size:17.500px;letter-spacing:.28px;line-height:20px;color:#000;white-space:nowrap;overflow:hidden;text-overflow:ellipsis}
.part:last-child div{margin-top:7px}
.part:last-child b{letter-spacing:.35px}
.part small{display:block;font-size:15px;line-height:16px;color:#222}
.pager{flex:1;background:#f1f1f1;border-top:2px solid #ddd;display:flex;align-items:center;justify-content:center;gap:5px;font-size:18px;padding:2px 0 0 0}
.pg{width:66px;height:32px;border:1.500px solid #aaa;background:#fff;text-align:right;line-height:29px;padding-right:4px;font-size:19px}
.center{width:1061px;flex:none;position:relative;border-left:2px solid #bbb;display:flex;flex-direction:column;background:#f9f9f9}
.viewrow{display:flex;height:689px}
.paper{width:1034px;padding:43px 0 0 29px}
.sheetarea{height:646px;border-left:2px solid #b9b9b9;border-top:2px solid #b9b9b9;border-right:1px solid #eee;background-color:#fff;background-image:linear-gradient(90deg,#e6e6e6 1px,#f4f4f4 1px,#f4f4f4 2px,transparent 2px),linear-gradient(#e6e6e6 1px,#f4f4f4 1px,#f4f4f4 2px,transparent 2px);background-size:15px 15px;background-position:0 0}
.circuit{width:1003px;height:644px}
.lbl{font:bold 17.300px "Liberation Sans",sans-serif;fill:#000;stroke:none}
.pin{font:14.500px "Liberation Sans",sans-serif;fill:#333;stroke:none}
.heading{font:bold 22.500px "DejaVu Sans",sans-serif;fill:#111;stroke:none}
.heading.five{font:bold 34px "Liberation Sans",sans-serif}
.hbar{height:23px;background:#f1f1f1;width:1034px;display:flex;align-items:center;padding:2px 10px 0 8px;box-shadow:27px 0 #fff}
.lf,.rt{border:5.500px solid transparent;border-left:0;border-right:6px solid #505050}
.rt{border-left:6px solid #505050;border-right:0;margin-left:auto}
.hthumb{width:282px;height:21px;background:#c1c1c1;margin-left:266px}
.collapse{position:absolute;top:15px;width:46px;height:46px;background:#f9faf5;border:2px solid #ccc;display:flex;align-items:center;justify-content:center;padding-top:2px}
.cl{left:-2px;border-left:0;border-radius:0 6px 6px 0;padding-right:3px}
.cr{right:1px;border-right:0;border-radius:6px 0 0 6px;padding-right:2px}
.zooms{position:absolute;left:52px;top:15px;display:flex;gap:3px}
.zb{width:54px;height:46px;border:2px solid #aaa;border-radius:6px;background:linear-gradient(#fff,#eee);display:flex;align-items:center;justify-content:center;padding-bottom:2px}
.pages{position:absolute;left:20px;top:641px;display:flex;gap:6px}
.pagetab{width:135px;height:45px;background:#fff;border:2px solid #aaa;border-radius:4px;font-size:20px;line-height:38px;padding-left:13px;display:flex}
.caret{border:5px solid transparent;border-top:6px solid #777;border-bottom:0;margin:25px 0 0 26px;height:0}
.addpage{width:45px;height:45px;background:#ddd;border:2px solid #999;border-radius:4px;display:flex;align-items:center;justify-content:center}
.right{flex:1;display:flex;overflow:hidden}
.props{width:355px;background:#f9f9f9}
.props h2{margin:0;height:46px;border-bottom:2px solid #ddd;padding-left:14px;font-weight:normal;font-size:20px;line-height:48px;letter-spacing:-.2px;color:#777}
.sec{margin:0 16px 0 14px;border-bottom:3px solid #ddd}
.s1{height:148px}.s2{height:151px}.s3{height:206px}.s4{border:0}
.sec h3{margin:0;font-size:19.500px;color:#000;line-height:24px;padding-top:19px;letter-spacing:-.05px}
.sec p{margin:0;display:flex;justify-content:space-between;font-size:17.500px;line-height:33px;letter-spacing:.1px}
.s1 p:nth-child(2){margin-top:6px}
.sec em{color:#888}
.opt{display:flex;align-items:flex-start;font-size:17.500px;line-height:24px;padding-top:18px;letter-spacing:.1px}
.opt span+span{margin-left:12px}
.check{width:16px;height:16px;border:1.500px solid #aaa;border-radius:3px;background:#e3e3e3}
.radio{width:18px;height:18px;border:1.500px solid #aaa;border-radius:50%;background:#e3e3e3;display:flex;align-items:center;justify-content:center;flex:none}
.radio.sel::after{content:"";width:8px;height:8px;border-radius:50%;background:#555}
.opt .check+span,.opt .radio+span{padding-top:4px;margin-top:-3px}
.radios{padding:18px 0 0 30px}
.opt .radio+span{margin-left:16px;margin-top:-3px}
.opt .r1+.radio{margin-left:39px}
.vp{padding-left:6px;padding-top:18px}
.sec h4{margin:20px 0 0 30px;font-size:17.500px;line-height:20px;letter-spacing:.15px;color:#555}
.textfield{width:280px;height:36px;margin:11px 0 0 30px;background:#fff;border:2px solid #bbb}
.s4 h3{padding-top:20px}
.select{margin-top:12px;height:27px;width:326px;border:1px solid #999;background:#fff;font-size:19.700px;line-height:25px;padding:0 9px 0 7px;display:flex;justify-content:space-between;align-items:center;letter-spacing:.1px}
.select span{border:5px solid transparent;border-top:9px solid #000;border-bottom:0}
.s4 h4{margin-top:22px}
.orient{padding:17px 0 0 38px}
.opt .r2+.radio{margin-left:46px}
/* taskbar */
.taskbar{height:60px;flex:none;background:#463d30;display:flex;font-family:"Open Sans",sans-serif;position:relative}
.tb{width:72px;height:60px;display:flex;align-items:center;justify-content:center;position:relative;flex:none}
.tb.w{width:75px}
.tb.w:nth-child(4){margin-left:3px}
.cur{background:linear-gradient(90deg,transparent 2px,#5e5646 2px)}
.u{position:absolute;bottom:0;left:8px;height:3px;width:61px;background:linear-gradient(90deg,#bfaa8e 48px,#938872 48px)}
.u3{left:2px;width:73px;background:#bfaa8e}
.u4{left:8px;width:61px}
.wd{font:bold 16px "Open Sans"}.pc{font:bold 14px "Open Sans"}.q{font:bold 22px "Open Sans"}.e{font:bold 20px "Open Sans"}.n{font:bold 17px "Open Sans"}
.tray{margin-left:auto;width:463px;display:flex;align-items:center;color:#fff}
.help{margin-top:4px}
.ppl{margin-left:33px}.chev{margin-left:32px}.eset{margin-left:14px}.wifi{margin-left:13px;margin-top:4px}
.lang{width:22px;margin-left:26px;font:16px "DejaVu Sans",sans-serif}
.clock{width:110px;margin-left:6px;text-align:center;font-size:17px;line-height:28px;letter-spacing:-.15px}
.note{margin-left:15px;margin-top:8px}
.tray::after{content:"";width:1.500px;height:60px;background:#8a8478;margin-left:auto;margin-right:7px}
```
